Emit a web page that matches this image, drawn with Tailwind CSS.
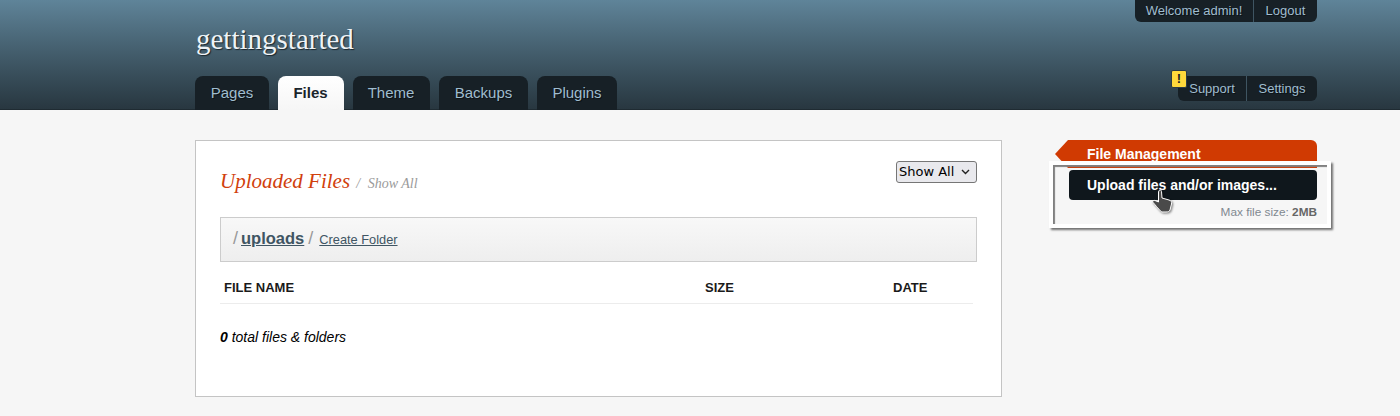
<!DOCTYPE html>
<html lang="en">
<head>
  <meta charset="UTF-8">
  <meta name="viewport" content="width=device-width, initial-scale=1.0">
  <script src="https://cdn.jsdelivr.net/npm/@tailwindcss/browser@4"></script>
  <title>Files</title>
</head>
<body class="bg-[#f6f6f6] font-['Liberation_Sans',sans-serif] h-[416px] overflow-hidden">
  <header class="h-[110px] bg-gradient-to-b from-[#5f8499] to-[#283740] border-b border-[#1f2b32]">
    <div class="ml-[195px] w-[1122px] h-[110px] flex justify-between">
      <div class="flex flex-col">
        <h1 class="mt-[22px] ml-px h-[54px] shrink-0 font-['Liberation_Serif',serif] text-[29px] leading-[34px] text-[#eef3f6] [text-shadow:1px_1px_1px_#1b262c]">gettingstarted</h1>
        <nav class="flex gap-[9px] text-[15px] text-[#a0bdcf] [text-shadow:1px_1px_0_#0c1216]">
          <a class="h-[34px] w-[74px] flex items-center justify-center rounded-t-lg bg-[#172026]">Pages</a>
          <a class="h-[34px] w-[66px] flex items-center justify-center pr-[1px] rounded-t-lg bg-gradient-to-b from-white to-[#f6f6f6] font-bold text-[#1a252c] [text-shadow:none]">Files</a>
          <a class="h-[34px] w-[77px] flex items-center justify-center pr-[1px] rounded-t-lg bg-[#172026]">Theme</a>
          <a class="h-[34px] w-[89px] flex items-center justify-center rounded-t-lg bg-[#172026]">Backups</a>
          <a class="h-[34px] w-[80px] flex items-center justify-center rounded-t-lg bg-[#172026]">Plugins</a>
        </nav>
      </div>
      <div class="flex flex-col justify-between items-end text-[13px] text-[#a0bdcf] [text-shadow:1px_1px_0_#0c1216]">
        <div class="flex h-[22px] bg-[#172026] rounded-b-md">
          <a class="w-[119px] flex items-center justify-center border-r border-[#3f5562]">Welcome admin!</a>
          <a class="w-[63px] flex items-center justify-center">Logout</a>
        </div>
        <div class="relative flex h-[25px] mb-[9px] bg-[#172026] rounded-md">
          <span class="absolute left-[-7px] top-[-6px] w-[16px] h-[18px] flex items-center justify-center rounded-[2px] bg-[#ffd83b] border border-[#2c3a44] text-[13px] font-bold text-[#222] [text-shadow:none]">!</span>
          <a class="w-[69px] flex items-center justify-center border-r border-[#3f5562]">Support</a>
          <a class="w-[70px] flex items-center justify-center">Settings</a>
        </div>
      </div>
    </div>
  </header>

  <main class="ml-[195px] w-[1122px] mt-[30px] flex justify-between items-start">
    <section class="w-[807px] h-[257px] bg-white border border-[#c4c4c4] px-[24px]">
      <div class="flex justify-between items-start h-[76px]">
        <h2 class="mt-[27px] font-['Liberation_Serif',serif] italic text-[21px] leading-[26px] text-[#d1400c]">Uploaded Files <span class="ml-[1px] text-[14px] text-[#9a9a9a]">/ <span class="ml-[4px]">Show All</span></span></h2>
        <div class="mt-[20px] w-[81px] h-[22px] flex items-center justify-between pl-[2px] pr-[6px] bg-[#e9e9ed] border border-[#767676] rounded-[3px] font-['DejaVu_Sans',sans-serif] text-[13px] text-black">
          <span>Show All</span>
          <svg width="9" height="6" viewBox="0 0 9 6" fill="none" stroke="#222" stroke-width="1.4"><path d="M1 1l3.500 3.500L8 1"/></svg>
        </div>
      </div>
      <div class="h-[45px] flex items-center pl-[12px] pb-[2px] bg-gradient-to-b from-[#f8f8f8] to-[#eeeeee] border border-[#cccccc] text-[#3f5563]">
        <span class="text-[18px] text-[#999]">/</span>
        <a class="ml-[3px] text-[16.5px] font-bold underline">uploads</a>
        <span class="ml-[4px] text-[18px] text-[#999]">/</span>
        <a class="ml-[6px] mt-[3px] text-[12.8px] underline">Create Folder</a>
      </div>
      <div class="w-[753px] h-[42px] flex items-end pb-[6px] border-b border-[#ececec] text-[13px] font-bold text-[#1a1a1a]">
        <span class="ml-[4px] w-[481px]">FILE NAME</span>
        <span class="w-[188px]">SIZE</span>
        <span>DATE</span>
      </div>
      <p class="mt-[24px] text-[14px] leading-[18px] italic text-black"><b>0</b> total files &amp; folders</p>
    </section>

    <aside class="relative w-[263px]">
      <div class="relative h-[28px] ml-[14px] pl-[19px] flex items-center bg-[#d03a02] rounded-tr-md text-[14px] font-bold text-white">
        <span class="absolute left-[-13px] top-0 border-y-[14px] border-y-transparent border-r-[13px] border-r-[#d03a02]"></span>
        <span>File Management</span>
      </div>
      <a class="mt-[2px] ml-[15px] w-[248px] h-[30px] flex items-center pl-[18px] bg-[#0f171c] rounded-[4px] text-[14px] font-bold text-white">Upload files and/or images...</a>
      <p class="mt-[5px] text-right text-[11.8px] leading-[14px] text-[#808890]">Max file size: <b class="text-[#666]">2MB</b></p>
      <!-- highlight frame laid over the box -->
      <div class="absolute left-[-5px] top-[21px] w-[282px] h-[67px] border-[4px] border-white shadow-[2px_2px_2px_rgba(0,0,0,.55),inset_2px_2px_1px_#808080]"></div>
      <svg class="absolute left-[96px] top-[48px] drop-shadow-[1px_1px_1px_rgba(0,0,0,.5)]" width="24" height="26" viewBox="0 0 24 26">
        <path d="M9 2.500C10 1.500 11.500 2 11.500 3.500L12 10L19 12C21 12.500 22 14 21.500 16L20 22C19.500 23.500 18 24 16 24L12 24C10 23 8 20 3.500 15C2 13.500 3 12 5 12.500L8.500 14L8.500 4Z" fill="#4a4a4a" stroke="#fff" stroke-width="1"/>
      </svg>
    </aside>
  </main>
</body>
</html>
